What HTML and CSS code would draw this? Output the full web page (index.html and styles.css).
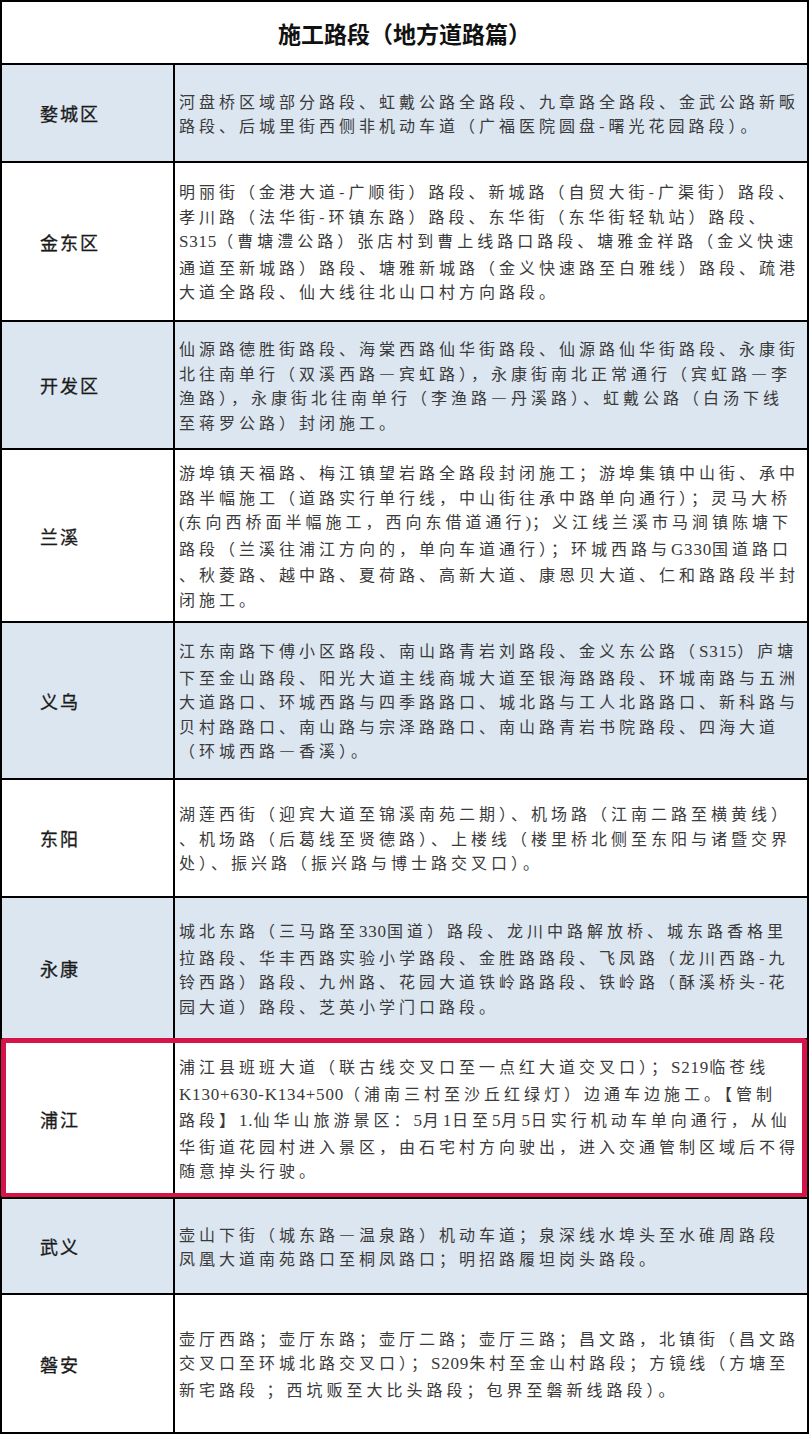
FILE: index.html
```html
<!DOCTYPE html>
<html lang="zh-CN">
<head>
<meta charset="utf-8">
<title>施工路段（地方道路篇）</title>
<link rel="stylesheet" href="styles.css">
</head>
<body>
<div class="sheet">
  <div class="title">施工路段（地方道路篇）</div>

  <div class="row blue r1">
    <div class="label">婺城区</div>
    <div class="body"><p>河盘桥区域部分路段、虹戴公路全路段、九章路全路段、金武公路新畈<br>路段、后城里街西侧非机动车道（广福医院圆盘-曙光花园路段）。</p></div>
  </div>

  <div class="row r2">
    <div class="label">金东区</div>
    <div class="body"><p>明丽街（金港大道-广顺街）路段、新城路（自贸大街-广渠街）路段、<br>孝川路（法华街-环镇东路）路段、东华街（东华街轻轨站）路段、<br><span class="en">S315</span>（曹塘澧公路）张店村到曹上线路口路段、塘雅金祥路（金义快速<br>通道至新城路）路段、塘雅新城路（金义快速路至白雅线）路段、疏港<br>大道全路段、仙大线往北山口村方向路段。</p></div>
  </div>

  <div class="row blue r3">
    <div class="label">开发区</div>
    <div class="body"><p>仙源路德胜街路段、海棠西路仙华街路段、仙源路仙华街路段、永康街<br>北往南单行（双溪西路—宾虹路），永康街南北正常通行（宾虹路—李<br>渔路），永康街北往南单行（李渔路—丹溪路）、虹戴公路（白汤下线<br>至蒋罗公路）封闭施工。</p></div>
  </div>

  <div class="row r4">
    <div class="label">兰溪</div>
    <div class="body"><p>游埠镇天福路、梅江镇望岩路全路段封闭施工；游埠集镇中山街、承中<br>路半幅施工（道路实行单行线，中山街往承中路单向通行）；灵马大桥<br><span class="en">(</span>东向西桥面半幅施工，西向东借道通行<span class="en">)</span>；义江线兰溪市马涧镇陈塘下<br>路段（兰溪往浦江方向的，单向车道通行）；环城西路与<span class="en">G330</span>国道路口<br>、秋菱路、越中路、夏荷路、高新大道、康恩贝大道、仁和路路段半封<br>闭施工。</p></div>
  </div>

  <div class="row blue r5">
    <div class="label">义乌</div>
    <div class="body"><p>江东南路下傅小区路段、南山路青岩刘路段、金义东公路（<span class="en">S315</span>）庐塘<br>下至金山路段、阳光大道主线商城大道至银海路路段、环城南路与五洲<br>大道路口、环城西路与四季路路口、城北路与工人北路路口、新科路与<br>贝村路路口、南山路与宗泽路路口、南山路青岩书院路段、四海大道<br>（环城西路—香溪）。</p></div>
  </div>

  <div class="row r6">
    <div class="label">东阳</div>
    <div class="body"><p>湖莲西街（迎宾大道至锦溪南苑二期）、机场路（江南二路至横黄线）<br>、机场路（后葛线至贤德路）、上楼线（楼里桥北侧至东阳与诸暨交界<br>处）、振兴路（振兴路与博士路交叉口）。</p></div>
  </div>

  <div class="row blue r7">
    <div class="label">永康</div>
    <div class="body"><p>城北东路（三马路至<span class="en">330</span>国道）路段、龙川中路解放桥、城东路香格里<br>拉路段、华丰西路实验小学路段、金胜路路段、飞凤路（龙川西路-九<br>铃西路）路段、九州路、花园大道铁岭路路段、铁岭路（酥溪桥头-花<br>园大道）路段、芝英小学门口路段。</p></div>
  </div>

  <div class="row r8">
    <div class="label">浦江</div>
    <div class="body"><p>浦江县班班大道（联古线交叉口至一点红大道交叉口）；<span class="en">S219</span>临苍线<br><span class="en">K130+630-K134+500</span>（浦南三村至沙丘红绿灯）边通车边施工。【管制<br>路段】<span class="en">1.</span>仙华山旅游景区：<span class="en">5</span>月<span class="en">1</span>日至<span class="en">5</span>月<span class="en">5</span>日实行机动车单向通行，从仙<br>华街道花园村进入景区，由石宅村方向驶出，进入交通管制区域后不得<br>随意掉头行驶。</p></div>
    <div class="highlight"></div>
  </div>

  <div class="row blue r9">
    <div class="label">武义</div>
    <div class="body"><p>壶山下街（城东路—温泉路）机动车道；泉深线水埠头至水碓周路段<br>凤凰大道南苑路口至桐凤路口；明招路履坦岗头路段。</p></div>
  </div>

  <div class="row r10">
    <div class="label">磐安</div>
    <div class="body"><p>壶厅西路；壶厅东路；壶厅二路；壶厅三路；昌文路，北镇街（昌文路<br>交叉口至环城北路交叉口）；<span class="en">S209</span>朱村至金山村路段；方镜线（方塘至<br>新宅路段 ；西坑贩至大比头路段；包界至磐新线路段）。</p></div>
  </div>
</div>
</body>
</html>
```

FILE: styles.css
```css
* {
  box-sizing: border-box;
}

html, body {
  margin: 0;
  padding: 0;
  background: #ffffff;
}

.sheet {
  width: 809px;
  border: 2px solid #000;
  font-family: "Noto Sans CJK SC", "Noto Sans", sans-serif;
  color: #333;
}

.title {
  height: 61px;
  display: flex;
  align-items: center;
  justify-content: center;
  font-size: 23px;
  font-weight: 700;
  color: #111;
}

.row {
  position: relative;
  display: grid;
  grid-template-columns: 173px 1fr;
  border-top: 2px solid #000;
  background: #ffffff;
}

.row.blue {
  background: #dce6f1;
}

.r1 { height: 98px; }
.r2 { height: 159px; }
.r3 { height: 128px; }
.r4 { height: 173px; }
.r5 { height: 157px; }
.r6 { height: 118px; }
.r7 { height: 142px; }
.r8 { height: 159px; }
.r9 { height: 96px; }
.r10 { height: 139px; }

.label {
  display: flex;
  align-items: center;
  padding-left: 38px;
  border-right: 2px solid #000;
  font-size: 18px;
  letter-spacing: 2px;
  color: #1a1a1a;
  -webkit-text-stroke: 0.3px #1a1a1a;
}

.body {
  display: flex;
  align-items: center;
  padding-left: 4px;
  font-size: 16px;
  letter-spacing: 4px;
  line-height: 24.5px;
  color: #3a3a3a;
  white-space: nowrap;
  overflow: hidden;
}

.body p {
  margin: 0;
}

.en {
  font-family: "Liberation Serif", serif;
  font-size: 17px;
  letter-spacing: 0.8px;
}

.highlight {
  position: absolute;
  top: -2px;
  left: -1px;
  right: 0;
  bottom: -1px;
  border: 5px solid #d7144a;
  border-radius: 3px;
  pointer-events: none;
}
```
